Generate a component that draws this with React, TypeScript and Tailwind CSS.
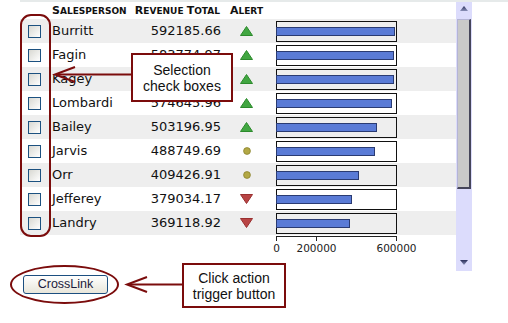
import React from "react";

type Row = { name: string; value: number; alert: "up" | "mid" | "down" };

const rows: Row[] = [
  { name: "Burritt", value: 592185.66, alert: "up" },
  { name: "Fagin", value: 583774.97, alert: "up" },
  { name: "Kagey", value: 582961.12, alert: "up" },
  { name: "Lombardi", value: 574645.96, alert: "up" },
  { name: "Bailey", value: 503196.95, alert: "up" },
  { name: "Jarvis", value: 488749.69, alert: "mid" },
  { name: "Orr", value: 409426.91, alert: "mid" },
  { name: "Jefferey", value: 379034.17, alert: "down" },
  { name: "Landry", value: 369118.92, alert: "down" },
];

function AlertIcon({ kind }: { kind: Row["alert"] }) {
  if (kind === "up")
    return (
      <svg width="13" height="10" viewBox="0 0 13 10">
        <polygon points="6.5,0.5 12.5,9.5 0.5,9.5" fill="#41a641" stroke="#2c8a2c" strokeWidth="1" />
      </svg>
    );
  if (kind === "down")
    return (
      <svg width="13" height="10" viewBox="0 0 13 10">
        <polygon points="0.5,0.5 12.5,0.5 6.5,9.5" fill="#b84444" stroke="#9a3030" strokeWidth="1" />
      </svg>
    );
  return (
    <svg width="8" height="8" viewBox="0 0 8 8">
      <circle cx="4" cy="4" r="3.4" fill="#b3a845" stroke="#8c8430" strokeWidth="0.8" />
    </svg>
  );
}

function Head({ first, rest }: { first: string; rest: string }) {
  return (
    <span>
      <span className="text-[11px]">{first}</span>
      <span className="text-[9px]">{rest}</span>
    </span>
  );
}

export default function App() {
  return (
    <div
      className="relative w-[508px] h-[323px] bg-white overflow-hidden text-[#111]"
      style={{ fontFamily: '"DejaVu Sans", Verdana, sans-serif' }}
    >
      <div className="ml-[20px] h-[2px] bg-[#e6eaea]" />
      <div className="flex">
        <div className="ml-[20px] w-[436px]">
          {/* header */}
          <div className="flex h-[17px] items-end pb-[2px] font-bold leading-none">
            <div className="w-[32px]" />
            <div className="w-[80px]">
              <Head first="S" rest="ALESPERSON" />
            </div>
            <div className="w-[90px] text-right pr-[2px]">
              <Head first="R" rest="EVENUE " />
              <Head first="T" rest="OTAL" />
            </div>
            <div className="w-[49px] flex justify-center">
              <Head first="A" rest="LERT" />
            </div>
          </div>
          {rows.map((r, i) => (
            <div
              key={r.name}
              className={`flex h-[24px] items-center text-[13px] ${i % 2 === 0 ? "bg-[#eeeeee]" : "bg-white"}`}
            >
              <div className="w-[32px] pl-[8px] flex items-center">
                <div className="w-[13px] h-[13px] border border-[#1c5180] bg-gradient-to-br from-[#d8d8d2] to-white" />
              </div>
              <div className="w-[80px]">{r.name}</div>
              <div className="w-[90px] text-right pr-[1px]">{r.value.toFixed(2)}</div>
              <div className="w-[49px] flex justify-center items-center">
                <AlertIcon kind={r.alert} />
              </div>
              <div className="pl-[5px]">
                <div className="relative w-[121px] h-[21px] border border-[#111] flex items-center">
                  <div
                    className="-ml-[1px] h-[9px] bg-[#5a7bd6] border border-[#2a3b72]"
                    style={{ width: `${(r.value / 600000) * 121}px` }}
                  />
                </div>
              </div>
            </div>
          ))}
          <div className="ml-[246px]">
            <svg width="180" height="22" viewBox="0 0 180 22" className="overflow-visible">
              <g stroke="#222" strokeWidth="1">
                <line x1="10" y1="1.5" x2="131" y2="1.5" />
                <line x1="10.5" y1="1" x2="10.5" y2="6" />
                <line x1="50.5" y1="1" x2="50.5" y2="6" />
                <line x1="130.5" y1="1" x2="130.5" y2="6" />
              </g>
              <g fontSize="10.5" fill="#222" textAnchor="middle" fontFamily="DejaVu Sans, sans-serif">
                <text x="10.5" y="17">0</text>
                <text x="50.5" y="17">200000</text>
                <text x="130.5" y="17">600000</text>
              </g>
            </svg>
          </div>
        </div>
        {/* scrollbar */}
        <div className="w-[16px] h-[269px] bg-[#dcdcfc] flex flex-col">
          <div className="h-[17px] flex justify-center pt-[4px]">
            <svg width="8" height="5" viewBox="0 0 8 5">
              <defs>
                <linearGradient id="ua" x1="0" y1="0" x2="0" y2="1">
                  <stop offset="0" stopColor="#2a2f5a" />
                  <stop offset="1" stopColor="#8a90b8" />
                </linearGradient>
              </defs>
              <polygon points="4,0 8,5 0,5" fill="url(#ua)" />
            </svg>
          </div>
          <div className="ml-[1px] w-[14px] h-[170px] bg-[#c9c9c9] border-l border-t border-[#b4b4d4] border-r-2 border-r-[#45455a] border-b-2 border-b-[#45455a]" />
          <div className="flex-1" />
          <div className="h-[11px] flex justify-center">
            <svg width="8" height="5" viewBox="0 0 8 5">
              <defs>
                <linearGradient id="da" x1="0" y1="0" x2="0" y2="1">
                  <stop offset="0" stopColor="#2a2f5a" />
                  <stop offset="1" stopColor="#8a90b8" />
                </linearGradient>
              </defs>
              <polygon points="0,0 8,0 4,5" fill="url(#da)" />
            </svg>
          </div>
        </div>
      </div>
      {/* button */}
      <div className="mt-[4px] ml-[23px]">
        <button
          className="w-[85px] h-[19px] rounded-[3px] border border-[#1c4f80] bg-gradient-to-b from-white to-[#e8e6da] text-[12.5px] leading-none text-[#1b1b3c] flex items-center justify-center"
          style={{ fontFamily: '"Liberation Sans", Arial, sans-serif' }}
        >
          CrossLink
        </button>
      </div>

      {/* annotations */}
      <div className="absolute left-[20px] top-[14px] w-[31px] h-[223px] border-2 border-[#7b0c0c] rounded-[11px] pointer-events-none" />
      <div className="absolute left-[10px] top-[265px] w-[109px] h-[39px] border-2 border-[#7b0c0c] rounded-[50%] pointer-events-none" />
      <svg className="absolute left-0 top-0 pointer-events-none" width="508" height="323">
        <g stroke="#7b0c0c" strokeWidth="2" fill="none">
          <line x1="56" y1="74.5" x2="132" y2="74.5" />
          <polyline points="75,67 55,74.5 75,82" />
          <line x1="128" y1="284.5" x2="183" y2="284.5" />
          <polyline points="147,277 127,284.5 147,292" />
        </g>
      </svg>
      <div
        className="absolute left-[131px] top-[53px] w-[102px] h-[49px] border-2 border-[#7b0c0c] bg-white flex flex-col items-center justify-center text-[14px] leading-[16px] text-[#111]"
        style={{ fontFamily: '"Liberation Sans", Arial, sans-serif' }}
      >
        <span>Selection</span>
        <span>check boxes</span>
      </div>
      <div
        className="absolute left-[182px] top-[263px] w-[104px] h-[45px] border-2 border-[#7b0c0c] bg-white flex flex-col items-center justify-center text-[14px] leading-[16px] text-[#111]"
        style={{ fontFamily: '"Liberation Sans", Arial, sans-serif' }}
      >
        <span>Click action</span>
        <span>trigger button</span>
      </div>
    </div>
  );
}
